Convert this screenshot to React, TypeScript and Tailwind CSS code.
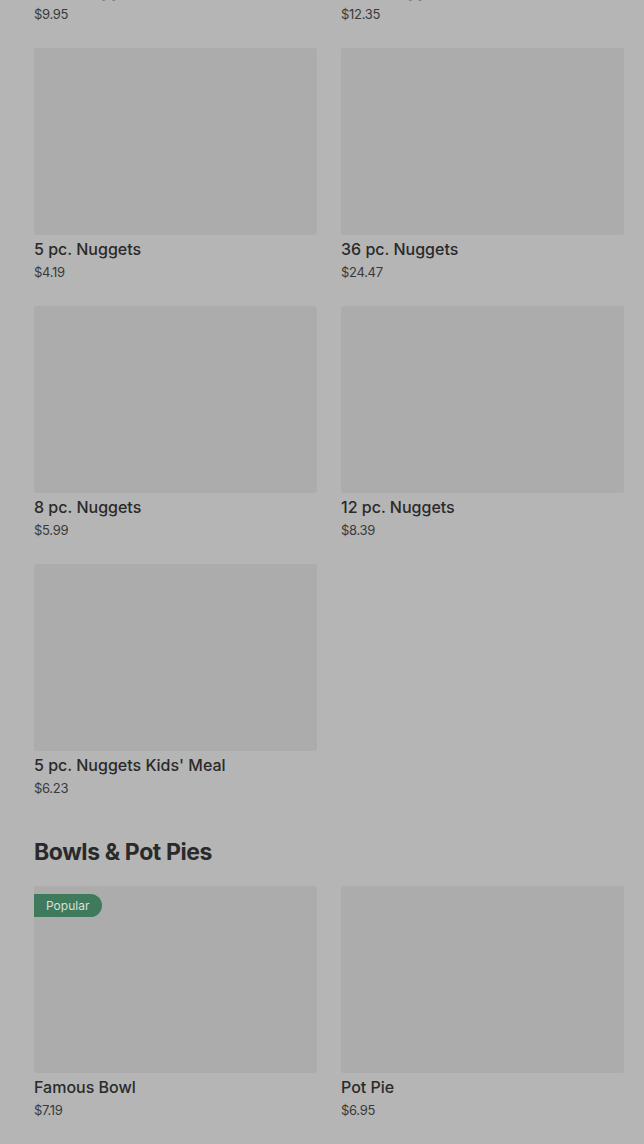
type Item = {
  name: string
  price: string
  popular?: boolean
}

const nuggets: Item[] = [
  { name: "4 pc. Nuggets Meal", price: "$9.95" },
  { name: "8 pc. Nuggets Meal", price: "$12.35" },
  { name: "5 pc. Nuggets", price: "$4.19" },
  { name: "36 pc. Nuggets", price: "$24.47" },
  { name: "8 pc. Nuggets", price: "$5.99" },
  { name: "12 pc. Nuggets", price: "$8.39" },
  { name: "5 pc. Nuggets Kids' Meal", price: "$6.23" },
]

const bowls: Item[] = [
  { name: "Famous Bowl", price: "$7.19", popular: true },
  { name: "Pot Pie", price: "$6.95" },
]

function ItemCard({ item }: { item: Item }) {
  return (
    <div className="flex flex-col">
      <div className="relative h-[187px] rounded-[3px] bg-[#acacac]">
        {item.popular && (
          <span className="absolute left-0 top-[8px] h-[23px] w-[68px] rounded-r-full bg-[#3e7a5b] pl-[12px] text-[12px] leading-[23px] text-[#d6e2db]">
            Popular
          </span>
        )}
      </div>
      <h3 className="mt-[4px] text-[16px] font-medium leading-[20px] text-[#2a2a2a]">{item.name}</h3>
      <p className="mt-[5px] text-[13px] leading-[16px] tracking-[-0.3px] text-[#3a3a3a]">{item.price}</p>
    </div>
  )
}

export default function App() {
  return (
    <div className="min-h-[1144px] overflow-hidden bg-[#b5b5b5] font-['Inter',sans-serif]">
      <div className="-mt-[210px] pl-[34px] pr-[20px] pb-[40px]">
        <div className="grid grid-cols-2 gap-x-[24px] gap-y-[26px]">
          {nuggets.map((item, idx) => (
            <ItemCard key={idx} item={item} />
          ))}
        </div>

        <h2 className="mt-[42px] text-[23px] font-bold leading-[28px] tracking-[-0.4px] text-[#2a2a2a]">
          Bowls &amp; Pot Pies
        </h2>

        <div className="mt-[20px] grid grid-cols-2 gap-x-[24px] gap-y-[26px]">
          {bowls.map((item, idx) => (
            <ItemCard key={idx} item={item} />
          ))}
        </div>
      </div>
    </div>
  )
}
